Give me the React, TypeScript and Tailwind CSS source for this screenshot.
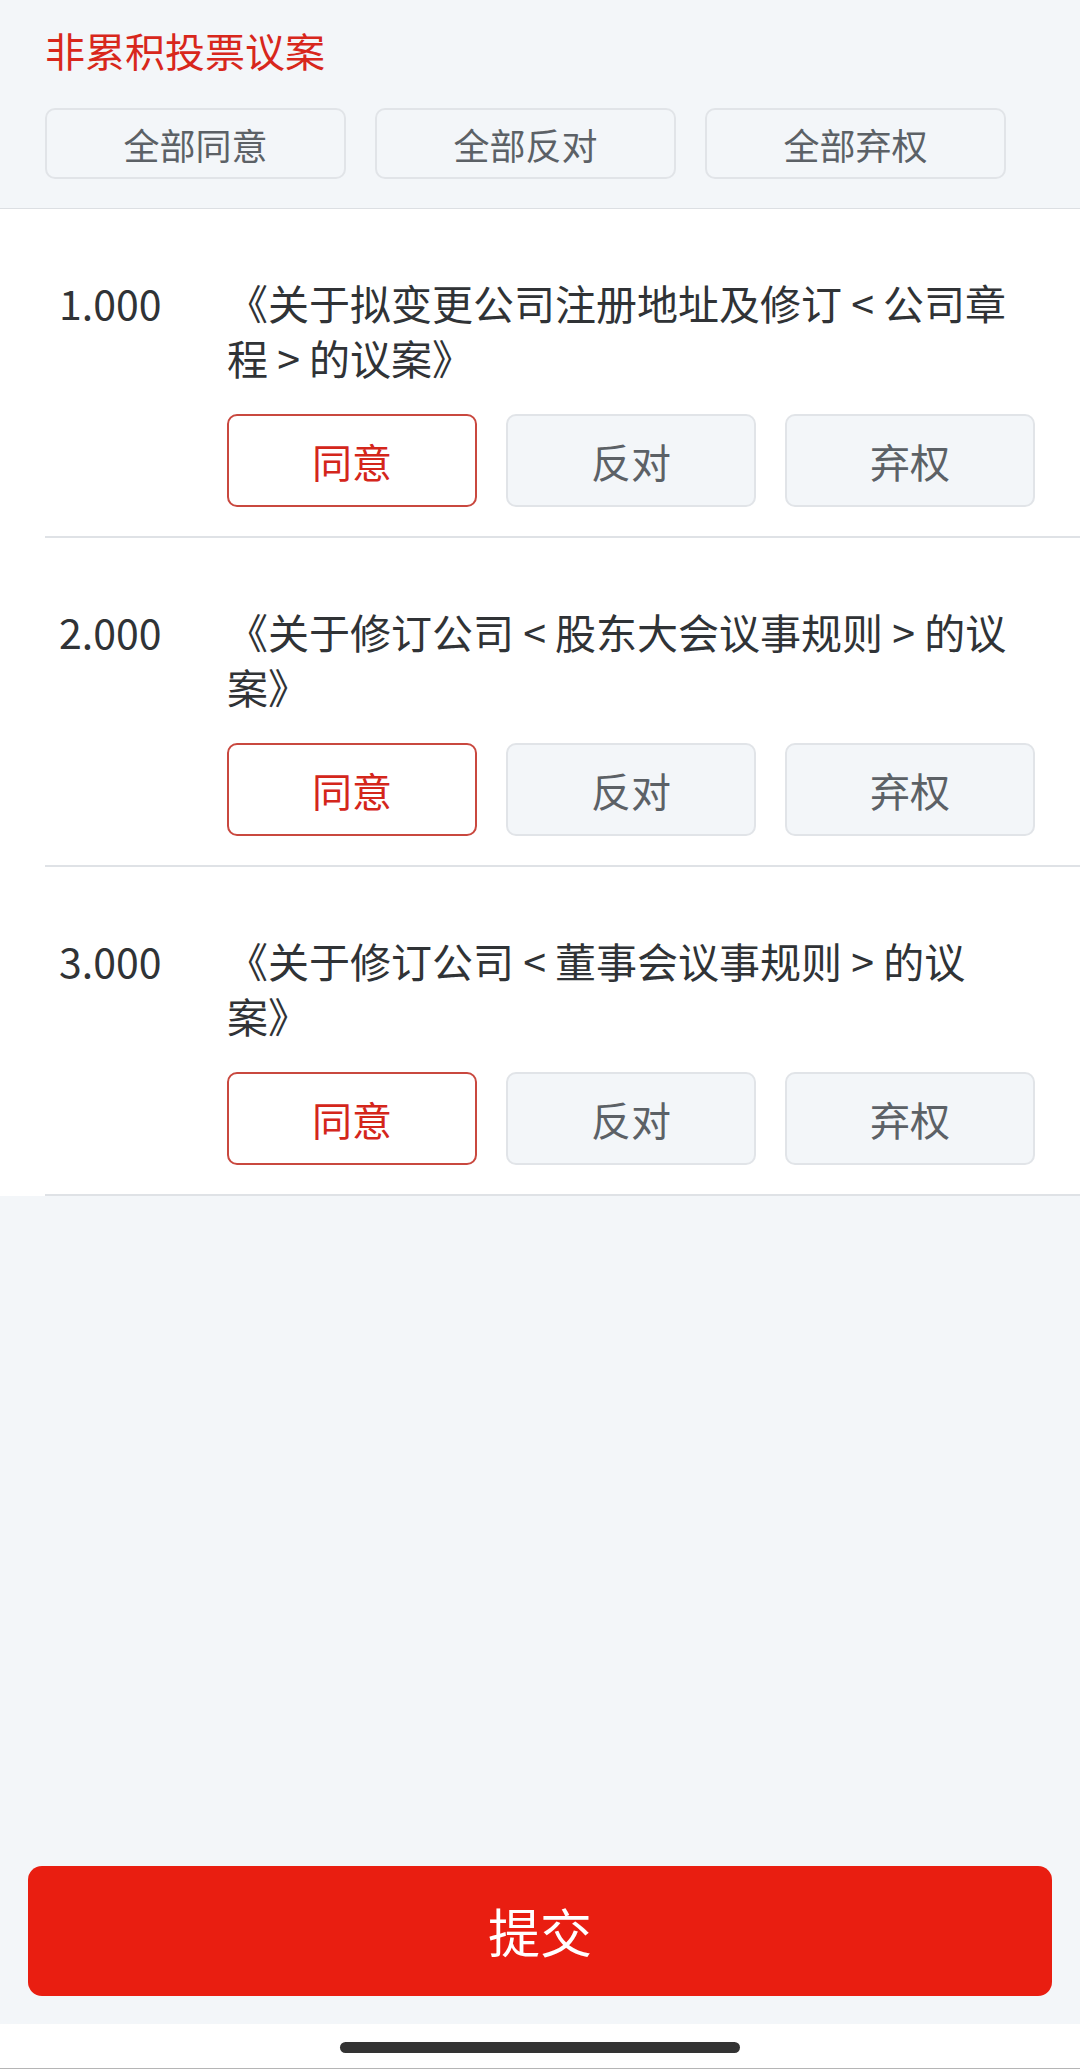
import { useState } from "react";

type Choice = "agree" | "oppose" | "abstain";

const proposals = [
  { id: "1.000", title: "《关于拟变更公司注册地址及修订 < 公司章程 > 的议案》" },
  { id: "2.000", title: "《关于修订公司 < 股东大会议事规则 > 的议案》" },
  { id: "3.000", title: "《关于修订公司 < 董事会议事规则 > 的议案》" },
];

const options: { key: Choice; label: string }[] = [
  { key: "agree", label: "同意" },
  { key: "oppose", label: "反对" },
  { key: "abstain", label: "弃权" },
];

export default function App() {
  const [votes, setVotes] = useState<Record<string, Choice>>({
    "1.000": "agree",
    "2.000": "agree",
    "3.000": "agree",
  });

  function setAll(choice: Choice) {
    const next: Record<string, Choice> = {};
    proposals.forEach((p) => (next[p.id] = choice));
    setVotes(next);
  }

  return (
    <div
      className="flex h-[2069px] w-[1080px] flex-col bg-[#f3f6f9]"
      style={{ fontFamily: '"Noto Sans CJK SC", "Noto Sans", sans-serif' }}
    >
      <div className="border-b border-[#dcdfe3] px-[45px] pb-[29px] pt-[24px]">
        <h1 className="text-[40px] leading-[52px] text-[#d8271c]">非累积投票议案</h1>
        <div className="mt-[32px] flex gap-[29px]">
          {[
            { key: "agree" as Choice, label: "全部同意" },
            { key: "oppose" as Choice, label: "全部反对" },
            { key: "abstain" as Choice, label: "全部弃权" },
          ].map((b) => (
            <button
              key={b.key}
              type="button"
              onClick={() => setAll(b.key)}
              className="flex h-[71px] w-[301px] items-center justify-center rounded-[10px] border-2 border-[#e1e4e8] bg-[#f3f6f9] text-[36px] text-[#5c6166]"
            >
              {b.label}
            </button>
          ))}
        </div>
      </div>

      <div className="bg-white">
        {proposals.map((p) => (
          <div key={p.id} className="ml-[45px] border-b-2 border-[#dfe2e6] pb-[29px] pt-[66px]">
            <div className="flex">
              <div className="w-[182px] pl-[14px] text-[41px] leading-[55px] text-[#303336]">
                {p.id}
              </div>
              <div className="w-[808px]">
                <p className="w-[790px] text-[41px] leading-[55px] text-[#303336]">{p.title}</p>
                <div className="mt-[29px] flex gap-[29px]">
                  {options.map((o) => {
                    const active = votes[p.id] === o.key;
                    return (
                      <button
                        key={o.key}
                        type="button"
                        onClick={() => setVotes({ ...votes, [p.id]: o.key })}
                        className={
                          active
                            ? "flex h-[93px] w-[250px] items-center justify-center rounded-[10px] border-2 border-[#c9483f] bg-white text-[40px] text-[#d4261b]"
                            : "flex h-[93px] w-[250px] items-center justify-center rounded-[10px] border-2 border-[#e1e4e8] bg-[#f3f6f9] text-[40px] text-[#5c6166]"
                        }
                      >
                        {o.label}
                      </button>
                    );
                  })}
                </div>
              </div>
            </div>
          </div>
        ))}
      </div>

      <div className="mt-auto px-[28px] pb-[28px]">
        <button
          type="button"
          className="flex h-[130px] w-full items-center justify-center rounded-[14px] bg-[#e91e11] text-[52px] text-white"
        >
          提交
        </button>
      </div>

      <div className="flex h-[45px] items-start justify-center border-b border-[#b5b5b5] bg-white pt-[18px]">
        <div className="h-[11px] w-[400px] rounded-full bg-[#333333]" />
      </div>
    </div>
  );
}
